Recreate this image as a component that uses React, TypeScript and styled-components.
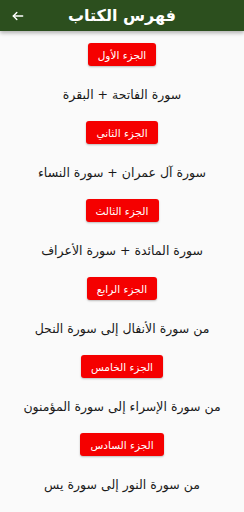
import React from "react";
import styled, { createGlobalStyle } from "styled-components";

const GlobalStyle = createGlobalStyle`
  html, body {
    margin: 0;
    padding: 0;
    background: #fafafa;
    font-family: "DejaVu Sans", "Noto Sans", sans-serif;
  }
`;

const Page = styled.div`
  width: 244px;
  min-height: 512px;
  background: #fafafa;
  direction: rtl;
  overflow: hidden;
`;

const Header = styled.header`
  height: 31px;
  background: #2c4f1e;
  display: flex;
  align-items: center;
  justify-content: center;
  position: relative;
  box-shadow: 0 2px 4px rgba(0, 0, 0, 0.3);
`;

const Title = styled.h1`
  margin: 0;
  color: #fff;
  font-size: 16px;
  font-weight: 700;
`;

const BackButton = styled.button`
  position: absolute;
  left: 10px;
  top: 8px;
  width: 16px;
  height: 16px;
  padding: 0;
  border: none;
  background: none;
  display: flex;
  align-items: center;
  justify-content: center;
`;

const List = styled.div`
  display: flex;
  flex-direction: column;
  align-items: center;
  padding-top: 12px;
`;

const Part = styled.div`
  height: 78px;
  display: flex;
  flex-direction: column;
  align-items: center;
`;

const PartButton = styled.button`
  height: 23px;
  padding: 0 10px;
  border: none;
  border-radius: 3px;
  background: #f50000;
  color: #fff;
  font-family: inherit;
  font-size: 10.5px;
  box-shadow: 0 1px 2px rgba(0, 0, 0, 0.25);
`;

const Sura = styled.div`
  margin-top: 21px;
  font-size: 12.5px;
  color: #1a1a1a;
`;

const parts = [
  { label: "الجزء الأول", text: "سورة الفاتحة + البقرة" },
  { label: "الجزء الثاني", text: "سورة آل عمران + سورة النساء" },
  { label: "الجزء الثالث", text: "سورة المائدة + سورة الأعراف" },
  { label: "الجزء الرابع", text: "من سورة الأنفال إلى سورة النحل" },
  { label: "الجزء الخامس", text: "من سورة الإسراء إلى سورة المؤمنون" },
  { label: "الجزء السادس", text: "من سورة النور إلى سورة يس" },
];

const App: React.FC = () => {
  return (
    <Page>
      <GlobalStyle />
      <Header>
        <Title>فهرس الكتاب</Title>
        <BackButton>
          <svg width="14" height="14" viewBox="0 0 24 24" fill="none" stroke="#fff" strokeWidth="2.4" strokeLinecap="round" strokeLinejoin="round">
            <path d="M20 12H4" />
            <path d="M10 6l-6 6 6 6" />
          </svg>
        </BackButton>
      </Header>
      <List>
        {parts.map((p) => (
          <Part key={p.label}>
            <PartButton>{p.label}</PartButton>
            <Sura>{p.text}</Sura>
          </Part>
        ))}
      </List>
    </Page>
  );
};

export default App;
